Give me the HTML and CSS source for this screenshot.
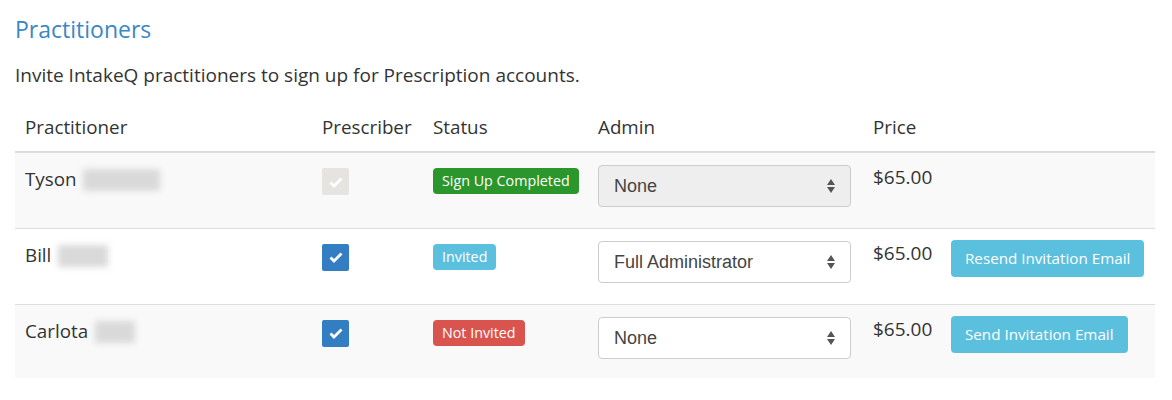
FILE: index.html
```html
<!DOCTYPE html>
<html lang="en">
  <head>
    <meta charset="UTF-8" />
    <meta name="viewport" content="width=device-width, initial-scale=1.0" />
    <title>Practitioners</title>
    <link rel="stylesheet" href="styles.css">
  </head>
  <body>
    <h2 class="title">Practitioners</h2>
    <p class="intro">Invite IntakeQ practitioners to sign up for Prescription accounts.</p>
    <table class="practitioners">
      <thead>
        <tr>
          <th class="col-name">Practitioner</th>
          <th class="col-presc">Prescriber</th>
          <th class="col-status">Status</th>
          <th class="col-admin">Admin</th>
          <th class="col-price">Price</th>
          <th class="col-action"></th>
        </tr>
      </thead>
      <tbody>
        <tr class="striped">
          <td class="name">Tyson <span class="blur" style="width: 77px"></span></td>
          <td><span class="check disabled"><svg viewBox="0 0 16 16" width="16" height="16"><path d="M2.5 8.5l3.5 3.5 7.5-7.5" fill="none" stroke="#fff" stroke-width="2.8"/></svg></span></td>
          <td><span class="badge success">Sign Up Completed</span></td>
          <td class="admin">
            <div class="select disabled">
              <span>None</span>
              <svg viewBox="0 0 10 16" width="10" height="16"><path d="M5 1L9 7H1z M5 15L9 9H1z" fill="#555"/></svg>
            </div>
          </td>
          <td class="price">$65.00</td>
          <td></td>
        </tr>
        <tr>
          <td class="name">Bill <span class="blur" style="width: 50px"></span></td>
          <td><span class="check"><svg viewBox="0 0 16 16" width="16" height="16"><path d="M2.5 8.5l3.5 3.5 7.5-7.5" fill="none" stroke="#fff" stroke-width="2.8"/></svg></span></td>
          <td><span class="badge info">Invited</span></td>
          <td class="admin">
            <div class="select">
              <span>Full Administrator</span>
              <svg viewBox="0 0 10 16" width="10" height="16"><path d="M5 1L9 7H1z M5 15L9 9H1z" fill="#555"/></svg>
            </div>
          </td>
          <td class="price">$65.00</td>
          <td class="action"><button class="btn">Resend Invitation Email</button></td>
        </tr>
        <tr class="striped">
          <td class="name">Carlota <span class="blur" style="width: 40px"></span></td>
          <td><span class="check"><svg viewBox="0 0 16 16" width="16" height="16"><path d="M2.5 8.5l3.5 3.5 7.5-7.5" fill="none" stroke="#fff" stroke-width="2.8"/></svg></span></td>
          <td><span class="badge danger">Not Invited</span></td>
          <td class="admin">
            <div class="select">
              <span>None</span>
              <svg viewBox="0 0 10 16" width="10" height="16"><path d="M5 1L9 7H1z M5 15L9 9H1z" fill="#555"/></svg>
            </div>
          </td>
          <td class="price">$65.00</td>
          <td class="action"><button class="btn">Send Invitation Email</button></td>
        </tr>
      </tbody>
    </table>
  </body>
</html>
```

FILE: styles.css
```css
* {
  margin: 0;
  padding: 0;
  box-sizing: border-box;
}

body {
  font-family: "Open Sans", Arial, sans-serif;
  color: #333;
  background-color: #fff;
  padding: 0 15px;
}

.title {
  font-size: 23px;
  font-weight: 400;
  color: #3a87c6;
  line-height: 30px;
  margin-top: 14px;
}

.intro {
  font-size: 19px;
  line-height: 26px;
  margin-top: 18px;
}

.practitioners {
  width: 1140px;
  table-layout: fixed;
  border-collapse: collapse;
  margin-top: 15px;
  font-size: 18.8px;
}

.practitioners th {
  text-align: left;
  font-weight: 400;
  padding: 12px 10px 12px;
  line-height: 24px;
  border-bottom: 2px solid #ddd;
}

.col-name { width: 297px; }
.col-presc { width: 111px; }
.col-status { width: 165px; }
.col-admin { width: 275px; }
.col-price { width: 78px; }
.col-action { width: 214px; }

.practitioners td {
  vertical-align: top;
  padding: 14px 10px;
  line-height: 24px;
  border-top: 1px solid #ddd;
  height: 76px;
}

.practitioners tbody tr:first-child td {
  border-top: none;
}

.practitioners tbody tr:last-child td {
  height: 74px;
}

.striped {
  background-color: #f9f9f9;
}

.name {
  font-weight: 500;
  white-space: nowrap;
}

.blur {
  display: inline-block;
  height: 22px;
  vertical-align: -5px;
  background-color: #d9d9d9;
  filter: blur(3px);
  margin-left: 2px;
}

.check {
  display: inline-flex;
  align-items: center;
  justify-content: center;
  width: 27px;
  height: 27px;
  margin-top: 1px;
  background-color: #337ec3;
  border-radius: 2px;
}

.check.disabled {
  background-color: #e6e4e1;
}

.badge {
  display: inline-block;
  white-space: nowrap;
  padding: 0 9px;
  height: 26px;
  line-height: 26px;
  font-size: 14.3px;
  color: #fff;
  border-radius: 4px;
}

.badge.success { background-color: #2b962b; }
.badge.info { background-color: #5bc0de; }
.badge.danger { background-color: #d9534f; }

.admin {
  padding-top: 12px !important;
}

.select {
  display: flex;
  align-items: center;
  justify-content: space-between;
  width: 253px;
  height: 42px;
  padding: 0 14px 0 15px;
  border: 1px solid #ccc;
  border-radius: 4px;
  background-color: #fff;
  font-family: "Liberation Sans", Arial, sans-serif;
  font-size: 18px;
  color: #444;
}

.select.disabled {
  background-color: #eee;
}

.price {
  font-size: 19px;
  padding-top: 12px !important;
}

.action {
  padding-top: 11px !important;
}

.btn {
  font-family: "Open Sans", Arial, sans-serif;
  font-size: 15.2px;
  color: #fff;
  background-color: #5bc0de;
  border: none;
  border-radius: 4px;
  height: 37px;
  padding: 0 14px;
  white-space: nowrap;
  cursor: pointer;
}
```
